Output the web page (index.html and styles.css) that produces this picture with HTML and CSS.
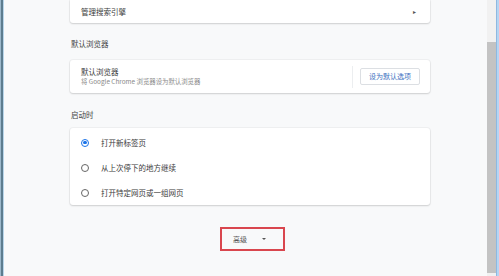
FILE: index.html
```html
<!DOCTYPE html>
<html lang="zh-CN">
<head>
<meta charset="utf-8">
<title>设置</title>
<link rel="stylesheet" href="styles.css">
</head>
<body>
<div class="window">
  <div class="frame-left"></div>
  <div class="main">
    <div class="content">
      <div class="card card-top">
        <div class="row-link">
          <span class="label">管理搜索引擎</span>
          <span class="arrow">&#9656;</span>
        </div>
      </div>

      <div class="section-title first">默认浏览器</div>
      <div class="card">
        <div class="row-default">
          <div class="texts">
            <div class="label">默认浏览器</div>
            <div class="sub">将 Google Chrome 浏览器设为默认浏览器</div>
          </div>
          <div class="sep"></div>
          <div class="btn">设为默认选项</div>
        </div>
      </div>

      <div class="section-title second">启动时</div>
      <div class="card radios">
        <div class="radio-row">
          <span class="radio on"></span>
          <span class="label">打开新标签页</span>
        </div>
        <div class="radio-row">
          <span class="radio"></span>
          <span class="label">从上次停下的地方继续</span>
        </div>
        <div class="radio-row">
          <span class="radio"></span>
          <span class="label">打开特定网页或一组网页</span>
        </div>
      </div>

      <div class="advanced">
        <span class="adv-text">高级</span>
        <span class="caret"></span>
      </div>
    </div>
  </div>
  <div class="scrollbar">
    <div class="thumb"></div>
  </div>
  <div class="frame-right"></div>
</div>
</body>
</html>
```

FILE: styles.css
```css
html, body {
  margin: 0;
  padding: 0;
}
body {
  font-family: "Noto Sans CJK SC", "Noto Sans", sans-serif;
  color: #333;
  overflow: hidden;
}
.window {
  display: flex;
  width: 499px;
  height: 276px;
  overflow: hidden;
}
.frame-left {
  width: 4px;
  flex: none;
  background: linear-gradient(to right, #9db9cc 0, #9db9cc 1px, #5d7c8e 1px, #5d7c8e 3px, #b9d6ea 3px);
}
.main {
  flex: 1;
  background: #f8f9fa;
  padding-left: 66px;
}
.content {
  width: 360px;
}
.card {
  background: #fff;
  border-radius: 3px;
  box-shadow: 0 0 0 1px rgba(0,0,0,0.035), 0 1px 2px rgba(0,0,0,0.14);
}
.card-top {
  height: 23px;
  border-radius: 0 0 3px 3px;
}
.row-link {
  display: flex;
  align-items: center;
  justify-content: space-between;
  height: 23px;
  padding: 0 14px 0 11px;
}
.label {
  font-size: 7.5px;
  line-height: 10px;
  color: #3a3a3a;
}
.arrow {
  font-size: 6px;
  color: #555;
}
.section-title {
  font-size: 7.5px;
  line-height: 10px;
  color: #444;
  padding-left: 1px;
}
.section-title.first {
  padding-top: 16px;
  padding-bottom: 11px;
}
.section-title.second {
  padding-top: 17px;
  padding-bottom: 8px;
}
.row-default {
  display: flex;
  align-items: center;
  height: 33px;
  padding: 0 10px 0 11px;
}
.texts {
  flex: 1;
}
.sub {
  font-size: 6.4px;
  line-height: 10px;
  color: #8a8a8a;
}
.sep {
  width: 1px;
  height: 22px;
  background: #eceef0;
  margin-right: 7px;
}
.btn {
  width: 58px;
  height: 15px;
  border: 1px solid #dcdfe3;
  border-radius: 2px;
  font-size: 7px;
  line-height: 15px;
  text-align: center;
  color: #3d6fc0;
}
.radios {
  padding: 2px 0 0;
}
.radio-row {
  display: flex;
  align-items: center;
  height: 25px;
  padding-left: 11px;
}
.radio {
  width: 6px;
  height: 6px;
  border: 1.3px solid #666;
  border-radius: 50%;
  margin-right: 12px;
  flex: none;
  position: relative;
}
.radio.on {
  border-color: #1a73e8;
}
.radio.on::after {
  content: "";
  position: absolute;
  left: 1.2px;
  top: 1.2px;
  width: 3.6px;
  height: 3.6px;
  border-radius: 50%;
  background: #1a73e8;
}
.advanced {
  margin: 22px 0 0 150px;
  width: 61px;
  height: 20px;
  border: 2px solid #d9464e;
  display: flex;
  align-items: center;
}
.adv-text {
  font-size: 7px;
  color: #555;
  margin-left: 11px;
}
.caret {
  width: 0;
  height: 0;
  border-left: 2px solid transparent;
  border-right: 2px solid transparent;
  border-top: 2px solid #555;
  margin-left: 15px;
}
.scrollbar {
  width: 9px;
  flex: none;
  background: #f1f1f1;
  padding-top: 42px;
  padding-bottom: 3px;
  box-sizing: border-box;
  display: flex;
}
.thumb {
  flex: 1;
  background: #c3c3c3;
}
.frame-right {
  width: 3px;
  flex: none;
  background: linear-gradient(to right, #8fb8e0 0, #8fb8e0 1px, #b5d5f3 1px);
}
```
